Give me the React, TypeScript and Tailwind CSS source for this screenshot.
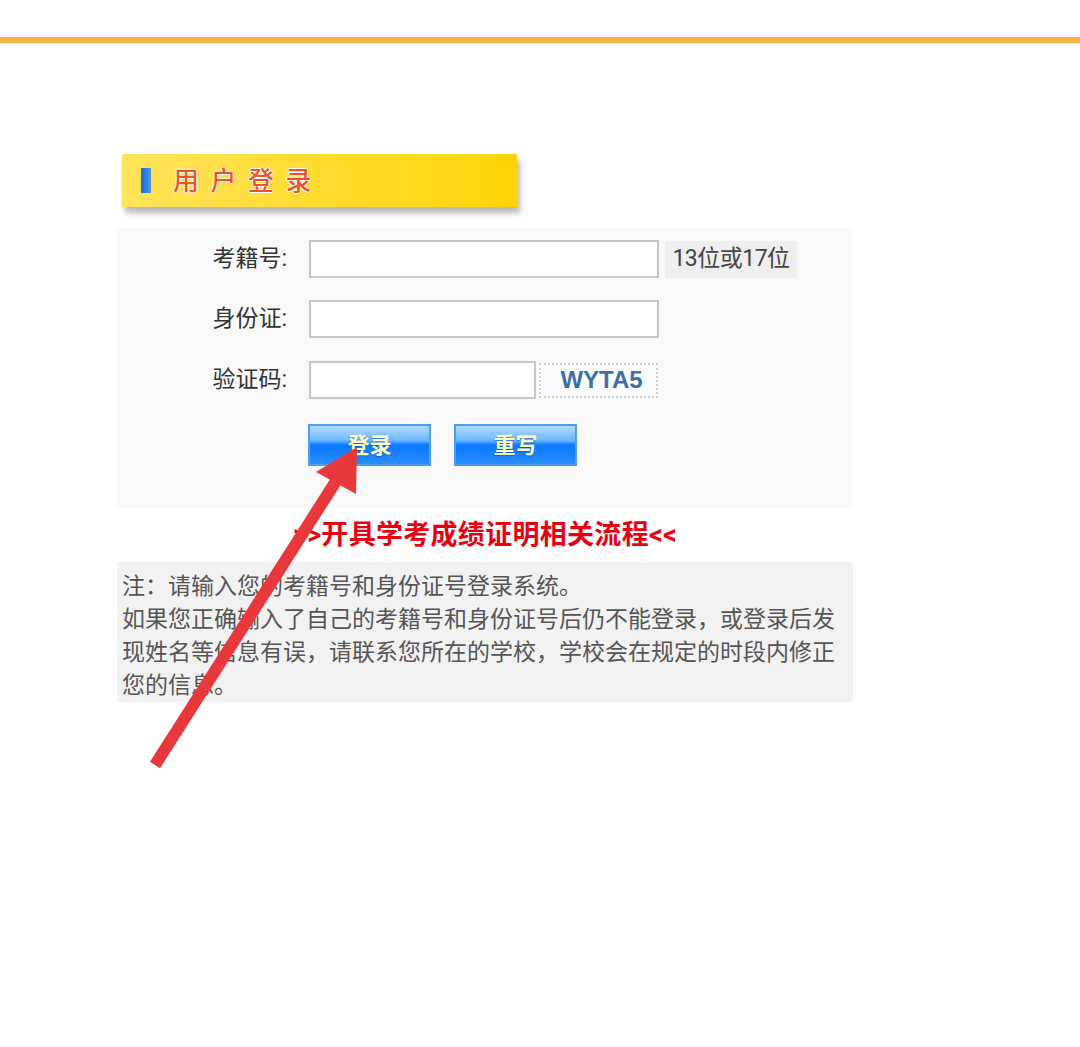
export default function App() {
    const font = { fontFamily: 'Roboto, "Noto Sans CJK SC", sans-serif' };
    return (
        <div className="relative min-h-screen bg-white" style={font}>
            <div className="pt-[37px]">
                <div className="h-[6px] bg-[#fbb048]" />
            </div>

            <div className="ml-[117px] w-[736px] pt-[111px]">
                {/* 标题栏 */}
                <div className="ml-[5px] flex h-[53px] w-[395px] items-center bg-gradient-to-r from-[#ffe45a] via-[#ffdc2c] to-[#ffd400] shadow-[3px_6px_6px_rgba(0,0,0,0.28)]">
                    <div className="ml-[19px] h-[25px] w-[10px] bg-gradient-to-r from-[#1b66d6] to-[#4a9cf0]" />
                    <span className="ml-[22px] mt-[2px] text-[26px] font-medium tracking-[11.5px] text-[#e9552a] [text-shadow:1px_0_0_#fff,-1px_0_0_#fff,0_1px_0_#fff,0_-1px_0_#fff]">
                        用户登录
                    </span>
                </div>

                {/* 表单 */}
                <div className="mt-[21px] bg-[#f9f9f9] pb-[42px] pt-[12px]">
                    <div className="flex h-[38px] items-center">
                        <label className="w-[170px] text-right text-[23px] text-[#333]">考籍号:</label>
                        <input className="ml-[22px] h-[38px] w-[350px] border-2 border-[#c6c6c6] bg-white" />
                        <span className="ml-[6px] flex h-[37px] w-[132px] items-center justify-center bg-[#efefef] text-[23px] tracking-[-0.5px] text-[#444]">
                            13位或17位
                        </span>
                    </div>
                    <div className="mt-[22px] flex h-[38px] items-center">
                        <label className="w-[170px] text-right text-[23px] text-[#333]">身份证:</label>
                        <input className="ml-[22px] h-[38px] w-[350px] border-2 border-[#c6c6c6] bg-white" />
                    </div>
                    <div className="mt-[23px] flex h-[38px] items-center">
                        <label className="w-[170px] text-right text-[23px] text-[#333]">验证码:</label>
                        <input className="ml-[22px] h-[38px] w-[227px] border-2 border-[#c6c6c6] bg-white" />
                        <div className="ml-[3px] flex h-[35px] w-[119px] items-center justify-center border-2 border-dotted border-[#c9d0d6] bg-[#fbfcfd]">
                            <span className="pl-[6px] text-[24px] font-bold text-[#3c6fa8]" style={{ fontFamily: '"Liberation Sans", Arial, sans-serif' }}>
                                WYTA5
                            </span>
                        </div>
                    </div>
                    <div className="ml-[191px] mt-[25px] flex gap-[23px]">
                        <button className="h-[42px] w-[123px] border-2 border-[#4f9ee8] bg-[linear-gradient(to_bottom,#b4dbff_0%,#6ab6ff_38%,#0a78ff_50%,#2a8cff_100%)] text-[22px] font-bold text-[#ffffc8] [text-shadow:0_1px_1px_rgba(0,60,140,0.5)]">
                            登录
                        </button>
                        <button className="h-[42px] w-[123px] border-2 border-[#4f9ee8] bg-[linear-gradient(to_bottom,#b4dbff_0%,#6ab6ff_38%,#0a78ff_50%,#2a8cff_100%)] text-[22px] font-bold text-[#ffffc8] [text-shadow:0_1px_1px_rgba(0,60,140,0.5)]">
                            重写
                        </button>
                    </div>
                </div>

                <div className="flex h-[54px] items-center justify-center">
                    <a className="text-[27px] font-bold tracking-[0.3px] text-[#e60012]">&gt;&gt;开具学考成绩证明相关流程&lt;&lt;</a>
                </div>

                {/* 注意事项 */}
                <div className="bg-[#f2f2f2] pl-[5px] pr-[4px] pt-[8px] text-[23px] leading-[33px] text-[#555]">
                    注：请输入您的考籍号和身份证号登录系统。
                    <br />
                    如果您正确输入了自己的考籍号和身份证号后仍不能登录，或登录后发现姓名等信息有误，请联系您所在的学校，学校会在规定的时段内修正您的信息。
                </div>
            </div>

            {/* 红色箭头 */}
            <svg className="pointer-events-none absolute left-0 top-0" width="1080" height="1047">
                <line x1="155" y1="765" x2="338" y2="478" stroke="#e8383b" strokeWidth="12" />
                <polygon points="357,447 316,472 356,494" fill="#e8383b" />
            </svg>
        </div>
    );
}
